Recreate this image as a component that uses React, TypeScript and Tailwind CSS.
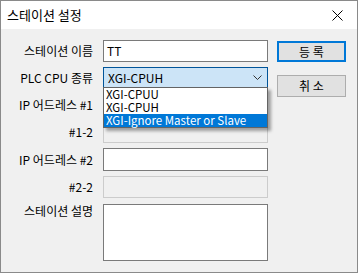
import { useState } from 'react'

const font = { fontFamily: '"Noto Sans CJK KR", "Noto Sans", sans-serif' }

function Label({ children, top = false }: { children: React.ReactNode; top?: boolean }) {
  return (
    <div
      className={`w-[92px] shrink-0 flex justify-end text-[12px] leading-none text-black ${
        top ? 'items-start pt-[1px]' : 'items-center'
      }`}
    >
      {children}
    </div>
  )
}

function TextBox({ value, disabled, className = '' }: { value?: string; disabled?: boolean; className?: string }) {
  return (
    <div
      className={`w-[165px] flex items-center px-[3px] text-[12px] ${
        disabled ? 'border border-[#cccccc] bg-[#f0f0f0]' : 'border border-[#7a7a7a] bg-white'
      } ${className}`}
    >
      {value}
    </div>
  )
}

export default function App() {
  const [open] = useState(true)

  return (
    <div className="w-[358px] h-[273px] bg-[#f0f0f0] border border-[#8a8a8a] flex flex-col select-none" style={font}>
      {/* title bar */}
      <div className="h-[28px] shrink-0 bg-white flex items-center justify-between pl-[6px] pr-[14px]">
        <span className="text-[13px] text-black">스테이션 설정</span>
        <svg width="11" height="11" viewBox="0 0 11 11">
          <path d="M0.5 0.5 L10.5 10.5 M10.5 0.5 L0.5 10.5" stroke="#000" strokeWidth="1" />
        </svg>
      </div>

      <div className="flex pt-[11px]">
        <div className="flex flex-col">
          <div className="flex h-[22px]">
            <Label>스테이션 이름</Label>
            <div className="w-[10px]" />
            <TextBox value="TT" className="h-[22px]" />
          </div>

          <div className="flex h-[21px] mt-[5px] relative">
            <Label>PLC CPU 종류</Label>
            <div className="w-[10px]" />
            <div className="w-[165px] h-[21px] border border-[#005499] bg-[#cce4f7] flex items-center justify-between pl-[4px] pr-[5px] text-[12px]">
              <span>XGI-CPUH</span>
              <svg width="9" height="6" viewBox="0 0 9 6">
                <path d="M0.5 0.5 L4.5 4.5 L8.5 0.5" stroke="#333" strokeWidth="1" fill="none" />
              </svg>
            </div>
            {open && (
              <div className="absolute left-[102px] top-[20px] w-[165px] bg-white border border-[#646464] shadow-[3px_3px_3px_rgba(0,0,0,0.35)] z-10 text-[11.5px]">
                <div className="h-[13px] leading-[13px] px-[2px]">XGI-CPUU</div>
                <div className="h-[13px] leading-[13px] px-[2px]">XGI-CPUH</div>
                <div className="h-[13px] leading-[13px] px-[2px] bg-[#0078d7] text-white">XGI-Ignore Master or Slave</div>
              </div>
            )}
          </div>

          <div className="flex h-[22px] mt-[6px]">
            <Label>IP 어드레스 #1</Label>
            <div className="w-[10px]" />
            <TextBox className="h-[22px]" />
          </div>

          <div className="flex h-[22px] mt-[5px]">
            <Label>#1-2</Label>
            <div className="w-[10px]" />
            <TextBox disabled className="h-[22px]" />
          </div>

          <div className="flex h-[23px] mt-[5px]">
            <Label>IP 어드레스 #2</Label>
            <div className="w-[10px]" />
            <TextBox className="h-[23px]" />
          </div>

          <div className="flex h-[22px] mt-[5px]">
            <Label>#2-2</Label>
            <div className="w-[10px]" />
            <TextBox disabled className="h-[22px]" />
          </div>

          <div className="flex h-[57px] mt-[6px]">
            <Label top>스테이션 설명</Label>
            <div className="w-[10px]" />
            <TextBox className="h-[57px]" />
          </div>
        </div>

        <div className="flex flex-col ml-[9px] pt-[1px]">
          <button className="w-[69px] h-[21px] bg-[#e1e1e1] border-2 border-[#0078d7] text-[12px] text-black flex items-center justify-center">
            등 록
          </button>
          <button className="w-[69px] h-[22px] mt-[13px] bg-[#e1e1e1] border border-[#adadad] text-[12px] text-black flex items-center justify-center">
            취 소
          </button>
        </div>
      </div>
    </div>
  )
}
